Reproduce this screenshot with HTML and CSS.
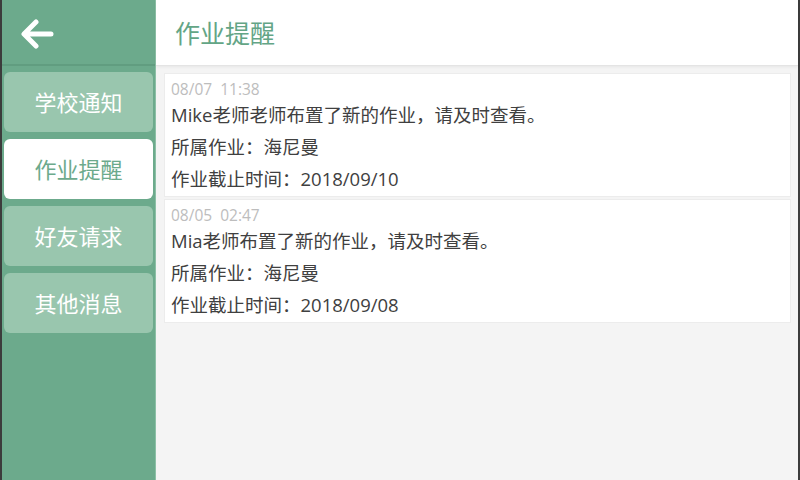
FILE: index.html
```html
<!DOCTYPE html>
<html lang="zh-CN">
<head>
    <meta charset="UTF-8">
    <title>作业提醒</title>
    <link rel="stylesheet" href="styles.css">
</head>
<body>
    <div class="app">
        <div class="side">
            <div class="side-head">
                <svg class="back" width="34" height="30" viewBox="0 0 34 30">
                    <path d="M31 15H5M16 3L4 15l12 12" fill="none" stroke="#fff" stroke-width="5" stroke-linecap="round" stroke-linejoin="round"/>
                </svg>
            </div>
            <div class="menu">
                <div class="item">学校通知</div>
                <div class="item on">作业提醒</div>
                <div class="item">好友请求</div>
                <div class="item">其他消息</div>
            </div>
        </div>
        <div class="main">
            <div class="head">作业提醒</div>
            <div class="list">
                <div class="card">
                    <div class="time">08/07&nbsp;&nbsp;11:38</div>
                    <div class="line">Mike老师老师布置了新的作业，请及时查看。</div>
                    <div class="line">所属作业：海尼曼</div>
                    <div class="line">作业截止时间：2018/09/10</div>
                </div>
                <div class="card">
                    <div class="time">08/05&nbsp;&nbsp;02:47</div>
                    <div class="line">Mia老师布置了新的作业，请及时查看。</div>
                    <div class="line">所属作业：海尼曼</div>
                    <div class="line">作业截止时间：2018/09/08</div>
                </div>
            </div>
        </div>
    </div>
</body>
</html>
```

FILE: styles.css
```css
*{
    margin: 0;
    padding: 0;
    box-sizing: border-box;
}
body{
    width: 800px;
    height: 480px;
    overflow: hidden;
    font-family: "Open Sans", "Noto Sans CJK SC", sans-serif;
}
.app{
    display: flex;
    height: 480px;
    border-left: 2px solid #3c3c3c;
    border-right: 2px solid #3c3c3c;
    background: #f4f4f4;
}
.side{
    width: 154px;
    background: #6caa8c;
    border-right: 1px solid #8cc0a6;
}
.side-head{
    height: 66px;
    border-bottom: 2px solid #619d80;
    padding: 19px 0 0 18px;
}
.menu{
    display: flex;
    flex-direction: column;
    gap: 7px;
    padding: 6px 2px 0 2px;
}
.item{
    height: 60px;
    border-radius: 6px;
    background: #99c6ae;
    color: #fff;
    font-size: 22px;
    text-align: center;
    line-height: 60px;
}
.item.on{
    background: #fff;
    color: #6caa8c;
}
.main{
    flex: 1;
    display: flex;
    flex-direction: column;
}
.head{
    height: 66px;
    background: #fff;
    border-bottom: 1px solid #e4e4e4;
    box-shadow: 0 1px 3px rgba(0,0,0,0.06);
    padding-left: 19px;
    font-size: 25px;
    line-height: 66px;
    color: #63a586;
}
.list{
    display: flex;
    flex-direction: column;
    gap: 2px;
    padding: 7px 7px 0 8px;
}
.card{
    background: #fff;
    border: 1px solid #ececec;
    padding: 5px 6px 1px 6px;
}
.time{
    font-size: 15.5px;
    line-height: 20px;
    color: #bdbdbd;
}
.line{
    font-size: 18.5px;
    line-height: 32px;
    color: #404040;
}
```
